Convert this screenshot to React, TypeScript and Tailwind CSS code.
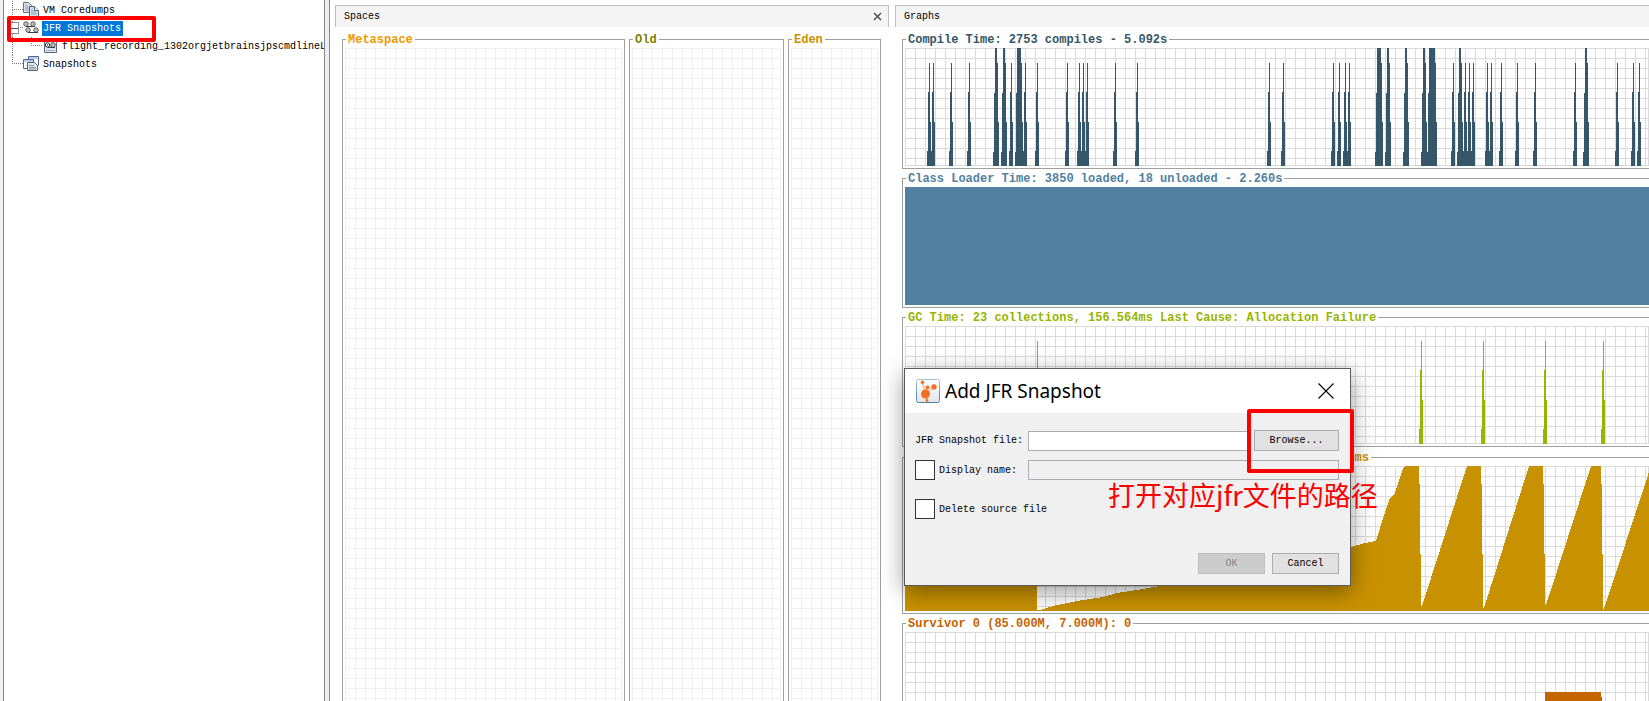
import React from 'react';

// [left edge, width] of the samples that reach the top of the plot
const compilePeaks = [
  [90, 2], [98, 2], [112, 4], [472, 4], [482, 2], [500, 2], [518, 2], [524, 6], [554, 2], [680, 2],
];

const compileSpikes = [
  24, 28, 46, 64, 106, 120, 132, 162, 174, 178, 182, 210, 232, 364, 378, 428, 434, 440, 444,
  548, 560, 564, 568, 582, 586, 596, 612, 630, 670, 712, 728, 734,
];

const gcSpikes = [132, 516, 578, 640, 698];

const edenUsage =
  'M0 145V0H132V144H136L138 143L152 139L172 135L198 131L212 127L238 123L260 119L446 81L460 77L471 75' +
  'L475 62L485 32L490 27L498 2L500 0H514V18H515V88H516V140H517L562 0H576V18H577V88H578V142H579' +
  'L624 0H638V18H639V88H640V139H641L686 0H696V18H697V88H698V143H699L744 6L760 -40V145Z';

const Spike: React.FC<{ x: number }> = ({ x }) => (
  <path d={`M${x - 2} 118V103H${x - 1}V44H${x}V15H${x + 1}V74H${x + 2}V118Z`} />
);

const Peak: React.FC<{ x: number; width: number }> = ({ x, width }) => (
  <path d={`M${x - 2} 118V104H${x - 1}V45H${x}V0H${x + width}V15H${x + width + 1}V74H${x + width + 2}V118Z`} />
);

interface PlotProps {
  id: string;
  grid: string;
  className: string;
  children?: React.ReactNode;
}

const Plot: React.FC<PlotProps> = ({ id, grid, className, children }) => (
  <svg className={`block w-full ${className}`} shapeRendering="crispEdges" aria-hidden="true">
    <defs>
      <pattern id={id} width="10" height="10" patternUnits="userSpaceOnUse">
        <rect width="10" height="1" fill={grid} />
        <rect width="1" height="10" fill={grid} />
      </pattern>
    </defs>
    <rect width="100%" height="100%" fill={`url(#${id})`} />
    <rect width="100%" height="100%" fill="none" stroke={grid} strokeWidth="2" />
    {children}
  </svg>
);

interface PanelProps {
  title: string;
  color: string;
  className: string;
  children: React.ReactNode;
}

const Panel: React.FC<PanelProps> = ({ title, color, className, children }) => (
  <fieldset className={`min-w-0 border border-[#a0a0a0] px-[2px] ${className}`}>
    <legend className={`ml-px px-[2px] pt-[2px] text-[12px] leading-[16px] font-bold whitespace-nowrap ${color}`}>{title}</legend>
    {children}
  </fieldset>
);

// Dotted branch line in front of a tree node
const Branch: React.FC<{ className: string; last?: boolean }> = ({ className, last }) => (
  <span className={`shrink-0 flex flex-col ${className}`}>
    <span className="h-[9px] border-l border-b border-dotted border-[#808080]" />
    {!last && <span className="h-[9px] border-l border-dotted border-[#808080]" />}
  </span>
);

const CoredumpsIcon = () => (
  <svg className="w-4 h-4 shrink-0" viewBox="0 0 16 16" aria-hidden="true">
    <path d="M.5 .5h5l3 3v7h-8z" fill="#d5e0e8" stroke="#62788a" />
    <path d="M2 4h3M2 6h4M2 8h4" stroke="#8ba0b0" />
    <path d="M6.500 4.500h5l4 4v7h-9z" fill="#d5e0e8" stroke="#4d6375" />
    <path d="M11.500 4.500v4h4" fill="#fff" stroke="#4d6375" />
    <path d="M8 8h2M8 10h5M8 12h6" stroke="#8ba0b0" />
  </svg>
);

// Pair of tape reels with the tape running under them
const Reels: React.FC<{ x: number; y: number; gap: number }> = ({ x, y, gap }) => (
  <g stroke="#3c3c3c" fill="#fff">
    <path d={`M${x} ${y + 2.5}h${gap + 2}`} />
    <circle cx={x} cy={y} r="2.200" />
    <circle cx={x + gap} cy={y} r="2.200" />
    <circle cx={x} cy={y} r=".7" fill="#3c3c3c" stroke="none" />
    <circle cx={x + gap} cy={y} r=".7" fill="#3c3c3c" stroke="none" />
  </g>
);

const JfrIcon = () => (
  <svg className="w-4 h-4 shrink-0" viewBox="0 0 16 16" aria-hidden="true">
    <Reels x={3} y={4} gap={7} />
    <Reels x={5} y={10} gap={8} />
  </svg>
);

const RecordingIcon = () => (
  <svg className="w-[14px] h-[14px] shrink-0" viewBox="0 0 14 14" aria-hidden="true">
    <path d="M.5 .5h9l3 3v10h-12z" fill="#dce3ea" stroke="#56687a" />
    <Reels x={3.5} y={6} gap={5.5} />
    <path d="M2 11.500h9" stroke="#a9b5c0" />
  </svg>
);

const SnapshotsIcon = () => (
  <svg className="w-4 h-4 shrink-0" viewBox="0 0 16 16" aria-hidden="true">
    <path d="M5.500 .5h10v9h-10z" fill="#fff" stroke="#4a6a9a" />
    <path d="M6 2h9" stroke="#7f9cc6" />
    <path d="M.5 3.500h10v9h-10z" fill="#fff" stroke="#4a6a9a" />
    <path d="M1 5h9" stroke="#7f9cc6" />
    <path d="M4.500 6.500h7l3 3v5h-10z" fill="#e3e8ee" stroke="#56687a" />
    <path d="M6 9.500h5M6 11.500h7M6 13h7" stroke="#8c99a6" />
  </svg>
);

const AppIcon = () => (
  <svg className="w-6 h-6 shrink-0" viewBox="0 0 24 24" aria-hidden="true">
    <defs>
      <linearGradient id="app-frame" x1="0" y1="0" x2="0" y2="1">
        <stop offset="0" stopColor="#a9c3d6" />
        <stop offset="1" stopColor="#4f7da3" />
      </linearGradient>
      <linearGradient id="app-face" x1="0" y1="0" x2="0" y2="1">
        <stop offset="0" stopColor="#fff" />
        <stop offset="1" stopColor="#e2e6e9" />
      </linearGradient>
    </defs>
    <rect x=".5" y=".5" width="23" height="23" rx="2" fill="url(#app-face)" stroke="url(#app-frame)" />
    <path d="M6.500 3.500L9.500 15L18 8M9.500 15L11.500 8.500M9.500 15L11 21.500" fill="none" stroke="#f79a63" />
    <circle cx="9.500" cy="15" r="4.500" fill="#f36f21" />
    <circle cx="18" cy="8" r="2.700" fill="#f36f21" />
    <circle cx="11.500" cy="8.500" r="1.900" fill="#f36f21" />
    <circle cx="6.500" cy="3.300" r="1.800" fill="#f36f21" />
    <circle cx="11" cy="21.500" r="1.400" fill="#f36f21" />
  </svg>
);

const Sidebar = () => (
  <aside className="w-[325px] shrink-0 bg-[#f0f0f0] pl-[3px]">
    <nav className="relative h-full overflow-hidden bg-white border-x border-[#828790] pt-px pl-2">
      <ul className="whitespace-nowrap leading-[15px]">
        <li className="flex items-center h-[18px]">
          <Branch className="w-[11px]" />
          <CoredumpsIcon />
          <span className="ml-[3px] px-px">VM Coredumps</span>
        </li>
        <li>
          <div className="flex items-center h-[18px]">
            <Branch className="w-[11px]" />
            <JfrIcon />
            <span className="ml-[3px] pl-px pr-[2px] bg-[#0078d7] text-white">JFR Snapshots</span>
            <button
              aria-label="Collapse"
              className="absolute left-[6px] top-[22px] w-[9px] h-[12px] flex items-center border border-[#919191] bg-white"
            >
              <span className="w-full h-px bg-[#3a57a0]" />
            </button>
          </div>
          <ul>
            <li className="flex items-center h-[18px]">
              <span className="w-[19px] h-full shrink-0 border-l border-dotted border-[#808080]" />
              <Branch className="w-[11px] h-[18px]" last />
              <span className="w-[2px] shrink-0" />
              <RecordingIcon />
              <span className="ml-[3px] pl-px">flight_recording_1302orgjetbrainsjpscmdlineL</span>
            </li>
          </ul>
        </li>
        <li className="flex items-center h-[18px]">
          <Branch className="w-[11px] h-[18px]" last />
          <SnapshotsIcon />
          <span className="ml-[3px] px-px">Snapshots</span>
        </li>
      </ul>
      <div className="absolute left-[3px] top-[16px] w-[149px] h-[26px] border-4 border-[#ff0000] rounded-xs" />
    </nav>
  </aside>
);

const Spaces = () => (
  <section className="flex flex-col min-w-0">
    <header className="h-[22px] mb-[3px] pl-2 pr-[6px] flex items-center justify-between bg-[#f4f4f4] border border-b-0 border-[#c0c0c0]">
      <h2>Spaces</h2>
      <button aria-label="Close Spaces">
        <svg className="block w-[9px] h-[9px]" viewBox="0 0 9 9" aria-hidden="true">
          <path d="M1 1l7 7M8 1l-7 7" stroke="#444" strokeWidth="1.300" />
        </svg>
      </button>
    </header>
    <div className="flex-1 min-h-0 pl-[7px] pr-2 grid grid-cols-[283fr_155fr_93fr] gap-1">
      <Panel title="Metaspace" color="text-[#ee9a00]" className="flex flex-col border-b-0">
        <Plot id="metaspace" grid="#f0f0f0" className="flex-1" />
      </Panel>
      <Panel title="Old" color="text-[#808000]" className="flex flex-col border-b-0">
        <Plot id="old" grid="#f0f0f0" className="flex-1" />
      </Panel>
      <Panel title="Eden" color="text-[#c89100]" className="flex flex-col border-b-0">
        <Plot id="eden" grid="#f0f0f0" className="flex-1" />
      </Panel>
    </div>
  </section>
);

const Graphs = () => (
  <section className="min-w-0">
    <header className="h-[22px] mb-[3px] pl-2 flex items-center bg-[#f4f4f4] border-t border-l border-[#c0c0c0]">
      <h2>Graphs</h2>
    </header>
    <div className="pl-[7px] flex flex-col gap-px">
      <div>
        <Panel title="Compile Time: 2753 compiles - 5.092s" color="text-[#355769]" className="border-r-0 pr-0 pb-[2px]">
          <Plot id="compile" grid="#dadada" className="h-[118px]">
            <g fill="#355769">
              {compilePeaks.map(([x, width]) => <Peak key={x} x={x} width={width} />)}
              {compileSpikes.map((x) => <Spike key={x} x={x} />)}
            </g>
          </Plot>
        </Panel>
        <Panel title="Class Loader Time: 3850 loaded, 18 unloaded - 2.260s" color="text-[#5181a0]" className="border-r-0 pr-0 pb-[2px]">
          <Plot id="loader" grid="#dadada" className="h-[118px]">
            <rect width="100%" height="100%" fill="#5181a0" />
          </Plot>
        </Panel>
        <Panel title="GC Time: 23 collections, 156.564ms Last Cause: Allocation Failure" color="text-[#98b400]" className="border-r-0 pr-0 pb-[2px]">
          <Plot id="gc" grid="#dadada" className="h-[118px]">
            <g fill="#98b400">
              {gcSpikes.map((x) => <Spike key={x} x={x} />)}
            </g>
          </Plot>
        </Panel>
      </div>
      <div>
        <Panel title="Eden Space (1.332G, 350.00M): 186.25M, 21 collections, 148.910ms" color="text-[#c89100]" className="border-r-0 pr-0 pb-[2px]">
          <Plot id="eden-space" grid="#dadada" className="h-[145px]">
            <path d={edenUsage} fill="#c89100" />
          </Plot>
        </Panel>
        <Panel title="Survivor 0 (85.000M, 7.000M): 0" color="text-[#c46400]" className="border-r-0 pr-0 pb-[2px]">
          <Plot id="survivor" grid="#dadada" className="h-[145px]">
            <path d="M640 145V60H696V65H697V145Z" fill="#c46400" />
          </Plot>
        </Panel>
      </div>
    </div>
  </section>
);

const AddSnapshotDialog = () => (
  <div
    role="dialog"
    aria-labelledby="dialog-title"
    className="absolute left-[904px] top-[368px] w-[447px] border border-[#5a5a5a] bg-[#f0f0f0] shadow-[0_6px_22px_rgba(0,0,0,0.4)]"
  >
    <header className="h-11 pl-[11px] pr-4 flex items-center bg-white">
      <AppIcon />
      <h1 id="dialog-title" className="ml-[5px] flex-1 font-['Noto_Sans','Open_Sans',sans-serif] text-[19px] leading-6">Add JFR Snapshot</h1>
      <button aria-label="Close">
        <svg className="block w-4 h-4" viewBox="0 0 16 16" aria-hidden="true">
          <path d="M.5 .5l15 15M15.500 .5l-15 15" stroke="#000" strokeWidth="1.100" />
        </svg>
      </button>
    </header>
    <form className="pt-[17px] pb-[11px] pl-[10px] pr-[11px]" onSubmit={(e) => e.preventDefault()}>
      <div className="flex items-center">
        <label htmlFor="file" className="w-[113px]">JFR Snapshot file:</label>
        <input id="file" type="text" className="flex-1 min-w-0 h-5 px-1 bg-white border border-[#abadb3]" />
        <button type="button" className="ml-[6px] w-[85px] h-[21px] bg-[#e1e1e1] border border-[#adadad]">Browse...</button>
      </div>
      <div className="mt-[9px] flex items-center">
        <input id="use-name" type="checkbox" className="appearance-none w-5 h-5 bg-white border border-[#333]" />
        <label htmlFor="use-name" className="w-[93px] pl-1">Display name:</label>
        <input type="text" disabled aria-label="Display name" className="flex-1 min-w-0 h-5 px-1 border border-[#abadb3]" />
      </div>
      <div className="mt-[19px] flex items-center">
        <input id="delete-source" type="checkbox" className="appearance-none w-5 h-5 bg-white border border-[#333]" />
        <label htmlFor="delete-source" className="pl-1">Delete source file</label>
      </div>
      <div className="mt-[34px] flex justify-end gap-[7px]">
        <button type="submit" disabled className="w-[67px] h-[21px] bg-[#cccccc] border border-[#bfbfbf] text-[#838383]">OK</button>
        <button type="button" className="w-[67px] h-[21px] bg-[#e1e1e1] border border-[#adadad]">Cancel</button>
      </div>
    </form>
    <div className="absolute left-[342px] top-[40px] w-[107px] h-[64px] border-4 border-[#ff0000] rounded-xs" />
    <p className="absolute left-[203px] top-[106px] whitespace-nowrap font-['Noto_Sans_CJK_SC',sans-serif] text-[27px] leading-[40px] text-[#ff0000]">
      打开对应jfr文件的路径
    </p>
  </div>
);

const App: React.FC = () => {
  return (
    <div className="relative h-screen overflow-hidden flex bg-white text-black text-[10px] leading-[15px] font-['Liberation_Mono',monospace]">
      <Sidebar />
      <div className="w-1 shrink-0 bg-[#eeeef2]" />
      <main className="flex-1 min-w-0 border-l border-[#828790] pl-[5px] pt-[5px] grid grid-cols-[554fr_754fr] gap-[6px]">
        <Spaces />
        <Graphs />
      </main>
      <AddSnapshotDialog />
    </div>
  );
};

export default App;
